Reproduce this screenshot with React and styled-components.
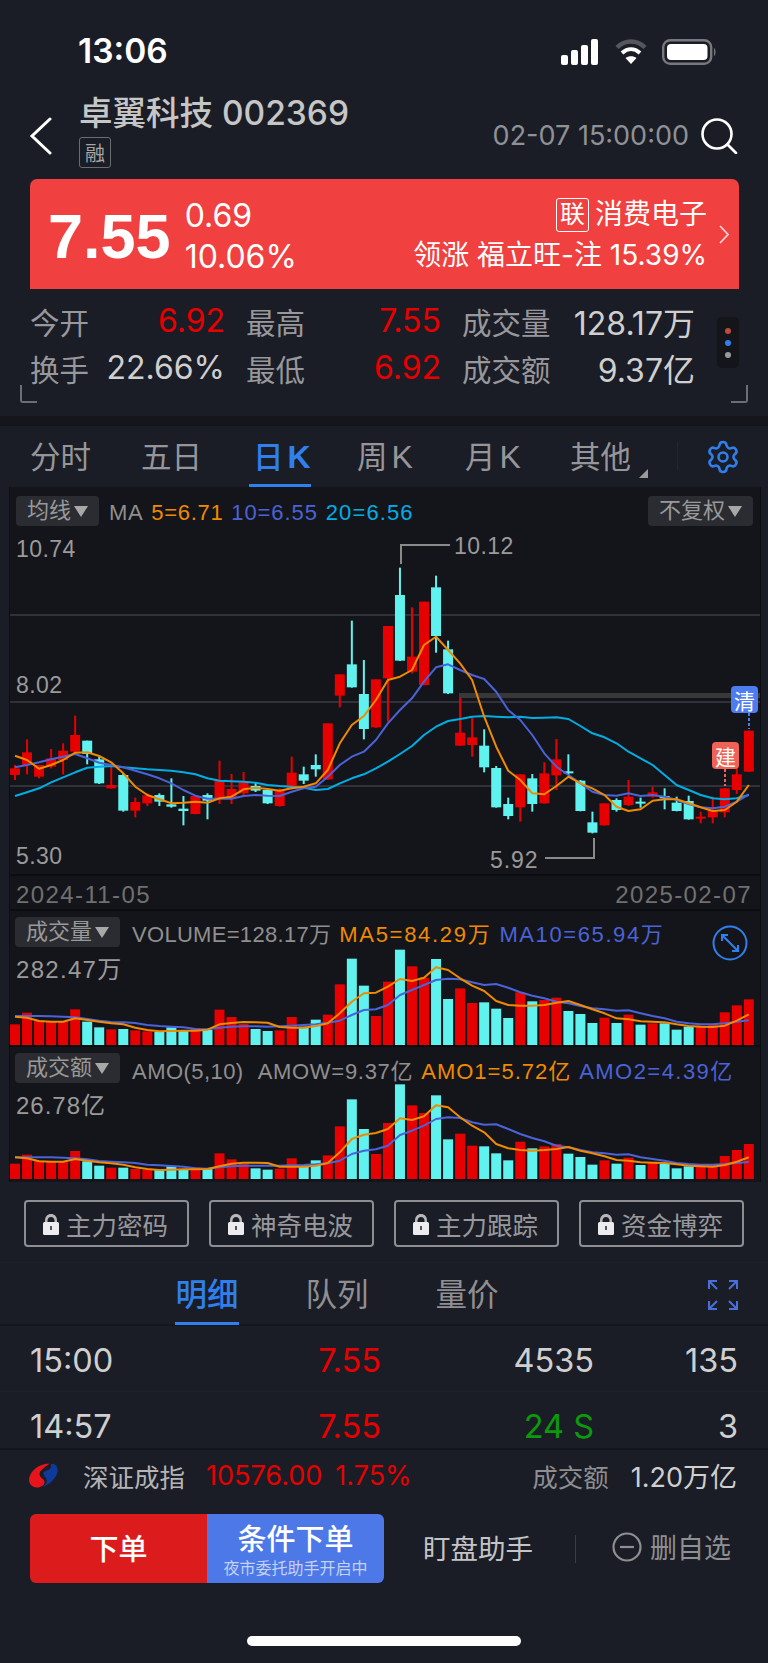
import React from 'react';
import styled, { createGlobalStyle } from 'styled-components';
import { Settings } from 'lucide-react';

const CN = '"Noto Sans CJK SC"';
const UI_FONT = `Inter, ${CN}, sans-serif`;
const CHART_FONT = `"Liberation Sans", ${CN}, sans-serif`;

const RED = '#e60000';
const CYAN = '#5ff2ee';
const ORANGE = '#f08a00';
const INDIGO = '#4a63d8';
const SKY = '#00aee6';
const BLUE = '#2f80ed';

const GlobalStyle = createGlobalStyle`
  html, body { margin: 0; padding: 0; background: #1a1d26; }
  * { box-sizing: border-box; }
`;

// Chart data, read off the picture. [rising, high, top, bottom, low]
const candles = [
  [1,705,715,735,750],[1,628,667,705,733],[1,705,705,740,745],[1,657,685,710,715],[1,640,662,690,733],
  [1,557,615,665,670],[0,632,632,672,703],[0,680,688,760,762],[1,700,765,775,776],[0,730,735,842,845],
  [1,803,816,842,862],[1,790,796,820,828],[0,790,795,815,828],[0,745,823,830,833],[0,798,836,843,886],
  [1,797,798,852,853],[0,790,795,812,868],[1,692,752,805,822],[1,732,777,805,822],[1,726,758,790,795],
  [0,758,768,782,786],[0,775,780,820,822],[1,775,780,828,830],[1,680,728,775,778],[0,710,733,752,762],
  [0,673,705,718,740],[1,580,580,748,750],[1,433,433,497,532],[0,272,403,472,473],[0,390,492,597,628],
  [1,448,448,592,594],[1,288,288,445,575],[0,113,195,392,393],[1,232,380,425,430],[1,215,215,465,466],
  [0,137,172,318,368],[0,332,358,490,492],[1,503,608,647,648],[1,563,622,645,680],[0,598,647,712,727],
  [0,708,714,832,833],[0,803,822,858,868],[1,733,733,832,875],[0,732,745,822,845],[1,697,730,820,821],
  [1,627,688,736,780],[0,673,724,730,735],[0,750,752,843,844],[0,845,877,908,910],[1,820,820,886,887],
  [0,805,810,840,845],[1,750,800,825,828],[0,803,815,820,833],[1,770,787,800,803],[0,775,798,805,838],
  [0,800,818,843,844],[0,797,813,868,869],[1,845,860,865,880],[1,800,840,862,880],[1,775,775,847,862],
  [1,715,733,780,792],[1,602,602,725,726],
];

const ma5 = [677,690,716,705,690,668,667,678,697,730,770,795,808,820,818,815,818,805,800,778,773,777,782,775,770,760,720,640,585,558,510,450,440,420,345,320,360,400,450,560,650,722,750,790,793,768,740,760,775,795,830,843,838,812,808,808,820,832,843,840,815,765];
const ma10 = [712,705,697,688,680,672,685,698,705,712,722,733,745,760,780,797,806,806,806,798,795,797,798,785,775,770,740,705,680,665,630,580,540,505,455,412,403,420,435,447,485,540,570,615,670,710,735,760,785,795,797,790,798,795,800,810,822,832,835,830,815,793];
const ma20 = [798,787,775,757,742,727,713,710,708,712,715,718,720,722,727,733,745,752,754,755,758,765,768,770,773,780,777,760,745,733,715,695,672,648,615,590,573,567,560,558,560,562,560,564,563,562,567,588,610,622,640,665,685,705,735,765,780,795,805,808,805,795];

const volTops = [358,323,347,350,349,313,350,367,373,372,376,379,380,367,377,369,375,314,336,357,372,378,376,336,365,344,329,238,161,242,333,230,134,184,218,162,282,250,294,292,311,339,262,289,285,278,318,327,354,338,354,329,359,355,355,374,365,362,357,322,301,283];
const volMa5 = [335,338,348,350,350,340,345,350,355,358,368,375,379,378,377,377,374,358,354,351,352,353,366,368,368,363,355,325,290,265,263,245,222,228,218,187,195,220,242,258,288,300,302,302,300,293,288,300,313,325,340,343,349,350,352,358,363,365,366,362,347,328];
const volMa10 = [333,333,333,334,335,337,342,347,351,352,354,360,363,365,367,372,373,368,365,364,364,365,364,362,360,358,353,347,330,315,313,300,270,255,240,225,221,223,232,240,237,248,262,272,280,290,295,303,310,313,317,316,325,333,340,350,355,358,358,355,350,346];

const amoTops = [779,752,770,772,772,741,772,785,791,791,795,797,797,787,795,790,795,748,766,780,793,797,794,763,789,769,754,667,586,675,750,657,541,604,627,574,706,689,725,727,748,769,713,733,727,720,749,759,782,769,779,761,783,775,780,793,787,782,782,756,738,720];
const amoMa1 = [760,763,772,773,773,765,770,775,778,782,790,795,798,797,796,796,795,787,779,776,776,777,788,788,788,785,777,745,705,692,687,675,643,648,637,604,610,640,665,685,720,733,738,740,738,735,729,740,748,757,768,770,775,776,777,781,785,787,788,783,773,760];
const amoMa2 = [760,760,760,760,761,763,766,771,773,775,777,782,784,786,788,793,794,790,787,785,785,785,785,784,783,781,778,770,750,740,736,725,693,680,665,645,640,642,655,662,661,675,690,702,712,725,730,738,745,748,752,751,760,765,770,777,780,782,782,780,777,774];

const STEP = 12.03;
const BAR_W = 10;
const barX = (i) => 5 + i * STEP;

const Page = styled.div`
  position: relative;
  width: 768px;
  height: 1663px;
  overflow: hidden;
  background: #1a1d26;
  font-family: ${UI_FONT};
  display: flex;
  flex-direction: column;
  color: #c8c8c8;
`;

// Status bar
const StatusBar = styled.div`
  height: 90px;
  flex: none;
  display: flex;
  align-items: flex-start;
  justify-content: space-between;
  padding: 34px 51px 0 78px;
`;

const Clock = styled.div`
  font-size: 33.5px;
  line-height: 34px;
  font-weight: 600;
  color: #fff;
`;

const StatusIcons = styled.div`
  display: flex;
  align-items: center;
  gap: 14px;
  padding-top: 5px;
`;

// Stock header
const Header = styled.div`
  height: 89px;
  flex: none;
  display: flex;
  padding: 0 30px 0 29px;
`;

const BackBtn = styled.div`
  width: 50px;
  display: flex;
  align-items: flex-start;
  padding-top: 27px;
`;

const TitleBlock = styled.div`
  flex: 1;
  display: flex;
  flex-direction: column;
  align-items: flex-start;
`;

const Title = styled.div`
  font-size: 33.5px;
  line-height: 40px;
  margin-top: 3px;
  color: #c6c6c6;
  font-weight: 500;
  white-space: nowrap;
`;

const TagBox = styled.div`
  width: 32px;
  height: 31px;
  margin-top: 4px;
  border: 1px solid #6a6c72;
  border-radius: 3px;
  display: flex;
  align-items: center;
  justify-content: center;
  font-size: 20px;
  color: #a6a6a6;
`;

const DateBlock = styled.div`
  display: flex;
  align-items: flex-start;
  gap: 11px;
  padding-top: 28px;
`;

const DateText = styled.div`
  font-size: 27px;
  line-height: 32px;
  color: #8f9196;
  margin-top: 2px;
  white-space: nowrap;
`;

// Red quote banner
const Banner = styled.div`
  height: 110px;
  flex: none;
  margin: 0 29px 0 30px;
  background: #f04040;
  border-radius: 7px 7px 0 0;
  display: flex;
  align-items: center;
  padding: 0 9px 0 18px;
  color: #fff;
`;

const BigPrice = styled.div`
  font-size: 63px;
  line-height: 60px;
  font-weight: 700;
  margin-top: 3px;
  margin-right: 14px;
  font-family: ${CHART_FONT};
`;

const ChangeBlock = styled.div`
  display: flex;
  flex-direction: column;
  gap: 4px;
  font-size: 32px;
  line-height: 37px;
  margin-top: 3px;
`;

const SectorBlock = styled.div`
  flex: 1;
  display: flex;
  flex-direction: column;
  align-items: flex-end;
  margin-right: 11px;
  margin-top: 2px;
  font-size: 28px;
  line-height: 41px;
  white-space: nowrap;
`;

const SectorName = styled.div`
  display: flex;
  align-items: center;
  gap: 6px;
`;

const LinkBadge = styled.span`
  width: 33px;
  height: 34px;
  border: 1px solid #fff;
  border-radius: 3px;
  display: flex;
  align-items: center;
  justify-content: center;
  font-size: 25px;
`;

// Quote stats
const Stats = styled.div`
  position: relative;
  height: 127px;
  flex: none;
  padding: 8px 0 0 30px;
  display: grid;
  grid-template-columns: 216px 216px 233px;
  grid-auto-rows: 47px;
  align-content: start;
`;

const StatCell = styled.div`
  display: flex;
  justify-content: space-between;
  align-items: center;
  padding-right: 21px;
  white-space: nowrap;
  font-size: 29.5px;
  &:nth-child(3n) { padding-right: 0; }
`;

const StatLabel = styled.span`
  color: #98989c;
`;

const StatValue = styled.span`
  color: ${(p) => (p.$red ? RED : '#cfcfcf')};
  font-size: 32px;
`;

const DotsBox = styled.div`
  position: absolute;
  left: 717px;
  top: 28px;
  width: 22px;
  height: 51px;
  border-radius: 5px;
  background: #13151b;
  display: flex;
  flex-direction: column;
  align-items: center;
  justify-content: center;
  gap: 6px;
`;

const Dot = styled.i`
  width: 6px;
  height: 6px;
  border-radius: 50%;
  background: ${(p) => p.$color};
`;

const CornerMark = styled.i`
  position: absolute;
  top: 96px;
  left: ${(p) => (p.$right ? '731px' : '20px')};
  width: 17px;
  height: 18px;
  border-bottom: 2px solid #6c6e74;
  border-${(p) => (p.$right ? 'right' : 'left')}: 2px solid #6c6e74;
  border-radius: ${(p) => (p.$right ? '0 0 3px 0' : '0 0 0 3px')};
`;

const Band = styled.div`
  height: 10px;
  flex: none;
  background: #14161b;
`;

// Period tabs
const PeriodTabs = styled.div`
  position: relative;
  height: 61px;
  flex: none;
  display: flex;
`;

const PeriodTab = styled.div`
  position: absolute;
  left: ${(p) => p.$left}px;
  top: 0;
  height: 61px;
  display: flex;
  align-items: baseline;
  padding-top: 11px;
  line-height: 40px;
  font-size: 30.5px;
  white-space: nowrap;
  color: ${(p) => (p.$active ? BLUE : '#96969a')};
  font-weight: ${(p) => (p.$active ? 500 : 400)};
  ${(p) => p.$active && `&::after {
    content: '';
    position: absolute;
    left: -4px;
    right: 0;
    bottom: 0;
    height: 3px;
    background: ${BLUE};
  }`}
`;

const KLetter = styled.span`
  font-family: ${CHART_FONT};
  font-weight: ${(p) => (p.$bold ? 700 : 400)};
  margin-left: 4px;
  font-size: 32px;
`;

const MoreMark = styled.i`
  position: absolute;
  left: 639px;
  top: 43px;
  width: 0;
  height: 0;
  border-left: 9px solid transparent;
  border-bottom: 9px solid #9a9a9a;
`;

const TabDivider = styled.i`
  position: absolute;
  left: 677px;
  top: 16px;
  width: 1px;
  height: 28px;
  background: #23262f;
`;

const GearWrap = styled.div`
  position: absolute;
  left: 705px;
  top: 13px;
  color: ${BLUE};
  display: flex;
`;

// Chart panels
const ChartArea = styled.div`
  height: 695px;
  flex: none;
  margin-left: 9px;
  width: 752px;
  background: #14151a;
  border-left: 1px solid #0c0d10;
  border-right: 1px solid #0c0d10;
  display: flex;
  flex-direction: column;
  font-family: ${CHART_FONT};
  letter-spacing: 0.45px;
`;

const PanelHead = styled.div`
  height: ${(p) => p.$h}px;
  flex: none;
  display: flex;
  align-items: flex-start;
  padding: ${(p) => p.$pt}px 7px 0 ${(p) => p.$pl}px;
  font-size: 22px;
  line-height: 30px;
  color: #8f8f8f;
  white-space: nowrap;
`;

const Pill = styled.div`
  height: 30px;
  padding: 0 11px 0 11px;
  border-radius: 4px;
  background: #2a2c31;
  color: #999;
  font-size: 22px;
  letter-spacing: 0;
  display: flex;
  align-items: center;
  gap: 3px;
  margin-right: ${(p) => p.$mr || 0}px;
  margin-left: ${(p) => (p.$end ? 'auto' : '0')};
`;

const Caret = styled.i`
  width: 0;
  height: 0;
  border-left: 7px solid transparent;
  border-right: 7px solid transparent;
  border-top: 11px solid #a8a8a8;
`;

const Reading = styled.span`
  color: ${(p) => p.$color || '#8f8f8f'};
  margin-right: ${(p) => p.$mr ?? 8}px;
  margin-top: ${(p) => p.$mt ?? 3}px;
  letter-spacing: ${(p) => p.$ls ?? 0.45}px;
`;

const ChartBox = styled.div`
  position: relative;
  height: ${(p) => p.$h}px;
  flex: none;
`;

const Plot = styled.svg`
  display: block;
  overflow: visible;
`;

const AxisLabel = styled.div`
  position: absolute;
  left: ${(p) => p.$left}px;
  top: ${(p) => p.$top}px;
  font-size: ${(p) => p.$size || 23}px;
  letter-spacing: ${(p) => p.$ls ?? 0.45}px;
  line-height: 24px;
  color: ${(p) => p.$color || '#9a9a9a'};
  white-space: nowrap;
`;

const TradeFlag = styled.div`
  position: absolute;
  left: ${(p) => p.$left}px;
  top: ${(p) => p.$top}px;
  width: 27px;
  height: 27px;
  border-radius: 4px;
  background: ${(p) => p.$color};
  color: #fff;
  font-size: 21px;
  letter-spacing: 0;
  display: flex;
  align-items: center;
  justify-content: center;
`;

const DateRow = styled.div`
  height: 37px;
  flex: none;
  border-top: 2px solid #0c0d10;
  border-bottom: 2px solid #0c0d10;
  display: flex;
  justify-content: space-between;
  align-items: center;
  padding: 5px 8px 0 6px;
  font-size: 24px;
  letter-spacing: 1.4px;
  color: #707070;
`;

const SubPanel = styled.div`
  flex: none;
  border-bottom: ${(p) => (p.$last ? 'none' : '2px solid #0c0d10')};
`;

const ExpandCircle = styled.div`
  position: absolute;
  right: 12px;
  top: -28px;
  color: ${BLUE};
  display: flex;
`;

// Locked indicator buttons
const IndicatorRow = styled.div`
  height: 80px;
  flex: none;
  padding: 18px 24px 0;
  display: grid;
  grid-template-columns: repeat(4, 1fr);
  gap: 20px;
  align-items: start;
`;

const IndicatorBtn = styled.div`
  height: 47px;
  border: 2px solid #8c8e92;
  border-radius: 4px;
  display: flex;
  align-items: center;
  padding-left: 16px;
  gap: 6px;
  font-size: 25.5px;
  color: #98989c;
  white-space: nowrap;
`;

// Trade detail
const DetailTabs = styled.div`
  position: relative;
  height: 64px;
  flex: none;
  border-top: 1px solid #1d2029;
  border-bottom: 2px solid #14161c;
  display: flex;
  gap: 66px;
  padding-left: 175px;
`;

const DetailTab = styled.div`
  position: relative;
  width: 64px;
  height: 61px;
  font-size: 31.5px;
  line-height: 64px;
  text-align: center;
  white-space: nowrap;
  color: ${(p) => (p.$active ? BLUE : '#8f8f92')};
  font-weight: ${(p) => (p.$active ? 500 : 400)};
  ${(p) => p.$active && `&::after {
    content: '';
    position: absolute;
    left: 0;
    right: 0;
    bottom: -1px;
    height: 3px;
    background: ${BLUE};
  }`}
`;

const FullscreenWrap = styled.div`
  position: absolute;
  left: 708px;
  top: 17px;
  display: flex;
`;

const RowList = styled.div`
  height: 122px;
  flex: none;
  overflow: hidden;
`;

const TradeRow = styled.div`
  height: 66px;
  border-bottom: 1px solid #1e2129;
  display: grid;
  grid-template-columns: 170px 181px 213px 144px;
  align-items: center;
  padding: 4px 0 0 30px;
  font-size: 32.5px;
`;

const Cell = styled.div`
  text-align: ${(p) => (p.$left ? 'left' : 'right')};
  color: ${(p) => p.$color || '#cfcfcf'};
  white-space: nowrap;
`;

// Index strip
const IndexRow = styled.div`
  height: 66px;
  flex: none;
  border-top: 2px solid #14161c;
  display: flex;
  align-items: center;
  padding: 0 31px 14px 29px;
  font-size: 26px;
  white-space: nowrap;
`;

const IndexName = styled.span`
  margin-left: 25px;
  color: #b4b4b6;
  font-size: 25.5px;
`;

const IndexNum = styled.span`
  color: ${RED};
  font-size: 27px;
  margin-left: ${(p) => p.$ml}px;
`;

const IndexAmount = styled.span`
  margin-left: auto;
  color: #8f8f92;
  font-size: 25.5px;
`;

const IndexAmountValue = styled.span`
  margin-left: 22px;
  color: #cfcfcf;
  font-size: 27px;
`;

// Bottom actions
const ActionRow = styled.div`
  height: 69px;
  flex: none;
  display: flex;
  align-items: center;
  padding-left: 30px;
`;

const OrderGroup = styled.div`
  width: 354px;
  height: 69px;
  display: flex;
  border-radius: 6px;
  overflow: hidden;
  color: #fff;
`;

const OrderBtn = styled.div`
  width: 177px;
  background: #dc1c1c;
  display: flex;
  align-items: center;
  justify-content: center;
  padding-bottom: 4px;
  font-size: 29px;
  font-weight: 500;
`;

const CondBtn = styled.div`
  width: 177px;
  background: #4c78e8;
  display: flex;
  flex-direction: column;
  align-items: center;
  padding-top: 9px;
`;

const CondTitle = styled.div`
  font-size: 29px;
  line-height: 34px;
  font-weight: 500;
`;

const CondSub = styled.div`
  font-size: 16px;
  line-height: 20px;
  margin-top: 1px;
  color: #c4d2f4;
  white-space: nowrap;
`;

const ActionText = styled.div`
  font-size: 27.5px;
  color: #c4c4c6;
  margin-left: ${(p) => p.$ml}px;
  margin-top: -4px;
  white-space: nowrap;
`;

const ActionDivider = styled.i`
  width: 1px;
  height: 28px;
  background: #3a3d45;
  margin-left: 42px;
`;

const RemoveBtn = styled.div`
  display: flex;
  align-items: center;
  gap: 8px;
  margin-left: 36px;
  margin-top: -4px;
  font-size: 27px;
  color: #8f8f92;
  white-space: nowrap;
`;

const HomeIndicator = styled.div`
  position: absolute;
  left: 247px;
  top: 1636px;
  width: 274px;
  height: 10px;
  border-radius: 5px;
  background: #fff;
`;

const linePath = (ys, toY) =>
  ys.map((y, i) => `${i ? 'L' : 'M'}${barX(i).toFixed(1)} ${toY(y).toFixed(1)}`).join(' ');

const MaLine = ({ ys, toY, color, w = 2 }) => (
  <path d={linePath(ys, toY)} fill="none" stroke={color} strokeWidth={w} strokeLinejoin="round" />
);

const PricePlot = () => {
  const toY = (z) => z / 3;
  return (
    <Plot width="750" height="344" viewBox="0 0 750 344">
      {[85, 172, 256].map((y) => (
        <line key={y} x1="0" x2="750" y1={y} y2={y} stroke="#30313a" strokeWidth="2" />
      ))}
      <rect x="449" y="163" width="301" height="5" fill="#383838" />
      {candles.map(([up, hi, top, bot, lo], i) => {
        const color = up ? RED : CYAN;
        return (
          <g key={i} fill={color}>
            <rect x={barX(i) - 1} y={toY(hi)} width="2" height={toY(lo) - toY(hi)} />
            <rect x={barX(i) - 5} y={toY(top)} width={BAR_W} height={Math.max(2, toY(bot) - toY(top))} />
          </g>
        );
      })}
      <MaLine ys={ma20} toY={toY} color={SKY} />
      <MaLine ys={ma10} toY={toY} color={INDIGO} />
      <MaLine ys={ma5} toY={toY} color={ORANGE} />
      <path d="M391 34V15H440" fill="none" stroke="#8a8a8a" strokeWidth="2" />
      <path d="M584 308V328H535" fill="none" stroke="#8a8a8a" strokeWidth="2" />
      <path d="M739 183V199" stroke="#4c7cf0" strokeWidth="2" strokeDasharray="3 2" />
      <path d="M715 239V256" stroke="#ef6255" strokeWidth="2" strokeDasharray="3 2" />
    </Plot>
  );
};

const BarsPlot = ({ tops, bottom, lines, offset, height }) => {
  const toY = (z) => z / 3 - offset;
  return (
    <Plot width="750" height={height} viewBox={`0 0 750 ${height}`}>
      {tops.map((t, i) => (
        <rect
          key={i}
          x={barX(i) - 5}
          y={toY(t)}
          width={BAR_W}
          height={toY(bottom) - toY(t)}
          fill={candles[i][0] ? RED : CYAN}
        />
      ))}
      {lines.map((l) => (
        <MaLine key={l.color} ys={l.ys} toY={toY} color={l.color} />
      ))}
    </Plot>
  );
};

const SignalIcon = () => (
  <svg width="40" height="26" viewBox="0 0 40 26" fill="#fff">
    <rect x="1" y="16" width="7" height="10" rx="2" />
    <rect x="11" y="11" width="7" height="15" rx="2" />
    <rect x="21" y="6" width="7" height="20" rx="2" />
    <rect x="31" y="0" width="7" height="26" rx="2" />
  </svg>
);

const WifiIcon = () => (
  <svg width="34" height="26" viewBox="0 0 34 26" fill="none">
    <path d="M3 8.5C11 0.5 23 0.5 31 8.5" stroke="#55575c" strokeWidth="4.5" />
    <path d="M8 14C13.5 9 20.5 9 26 14" stroke="#fff" strokeWidth="4" />
    <path d="M17 25L11.5 19C14.5 16.5 19.5 16.5 22.5 19Z" fill="#fff" />
  </svg>
);

const BatteryIcon = () => (
  <svg width="55" height="26" viewBox="0 0 55 26">
    <rect x="1.2" y="1.2" width="48" height="23.6" rx="7" fill="none" stroke="#77797e" strokeWidth="2.4" />
    <rect x="5" y="5" width="40.5" height="16" rx="4" fill="#fff" />
    <path d="M52 9C54 10 54 16 52 17Z" fill="#77797e" />
  </svg>
);

const BackIcon = () => (
  <svg width="23" height="38" viewBox="0 0 23 38" fill="none" stroke="#fff" strokeWidth="3" strokeLinecap="round">
    <path d="M21 2L3 19L21 36" />
  </svg>
);

const SearchIcon = () => (
  <svg width="38" height="36" viewBox="0 0 38 36" fill="none" stroke="#fff" strokeWidth="2.6" strokeLinecap="round">
    <circle cx="17" cy="16" r="14.5" />
    <path d="M28 27L36 35" />
  </svg>
);

const BannerChevron = () => (
  <svg width="12" height="19" viewBox="0 0 12 19" fill="none" stroke="#f8d4d4" strokeWidth="1.8">
    <path d="M2 1L10 9.5L2 18" />
  </svg>
);

const LockIcon = () => (
  <svg width="18" height="22" viewBox="0 0 18 22">
    <path d="M3 10V7.5C3 3.5 5.5 1 9 1S15 3.5 15 7.5V10" fill="#b8b8bc" />
    <path d="M5.5 10V8C5.5 5.5 7 4 9 4S12.5 5.5 12.5 8V10" fill="#1a1d26" />
    <rect x="1" y="9" width="16" height="13" rx="1.5" fill="#ececf0" />
    <rect x="8" y="13" width="2" height="4" fill="#555" />
  </svg>
);

const FullscreenIcon = () => (
  <svg width="30" height="30" viewBox="0 0 30 30" fill="none" stroke="#4a6fd8" strokeWidth="2">
    <path d="M1 9V1H9M1 1L9 9" />
    <path d="M29 9V1H21M29 1L21 9" />
    <path d="M1 21V29H9M1 29L9 21" />
    <path d="M29 21V29H21M29 29L21 21" />
  </svg>
);

const ResizeIcon = () => (
  <svg width="36" height="36" viewBox="0 0 36 36" fill="none" stroke="currentColor" strokeWidth="2">
    <circle cx="18" cy="18" r="16.5" />
    <path d="M10 10L26 26M10 16V10H16M26 20V26H20" />
  </svg>
);

const ExchangeLogo = () => (
  <svg width="29" height="25" viewBox="24 28 81 70">
    <path d="M82 30C55 28 25 50 24 75C24 92 40 100 55 95C68 90 72 80 62 72C52 65 50 55 60 47C66 42 72 35 82 30Z" fill="#e8141c" />
    <path d="M85 31C98 28 106 38 104 52C100 72 80 90 60 96C72 90 78 78 70 68C62 60 62 52 72 50C82 48 88 40 85 31Z" fill="#0e3a9c" />
  </svg>
);

const MinusCircle = () => (
  <svg width="30" height="30" viewBox="0 0 30 30" fill="none" stroke="#8f8f92" strokeWidth="2.2">
    <circle cx="15" cy="15" r="13.5" />
    <path d="M8 15H22" />
  </svg>
);

const stats = [
  { label: '今开', value: '6.92', red: true },
  { label: '最高', value: '7.55', red: true },
  { label: '成交量', value: '128.17万' },
  { label: '换手', value: '22.66%' },
  { label: '最低', value: '6.92', red: true },
  { label: '成交额', value: '9.37亿' },
];

const indicators = ['主力密码', '神奇电波', '主力跟踪', '资金博弈'];

const App = () => (
  <>
    <GlobalStyle />
    <Page>
      <StatusBar>
        <Clock>13:06</Clock>
        <StatusIcons>
          <SignalIcon />
          <WifiIcon />
          <BatteryIcon />
        </StatusIcons>
      </StatusBar>

      <Header>
        <BackBtn>
          <BackIcon />
        </BackBtn>
        <TitleBlock>
          <Title>卓翼科技 002369</Title>
          <TagBox>融</TagBox>
        </TitleBlock>
        <DateBlock>
          <DateText>02-07 15:00:00</DateText>
          <SearchIcon />
        </DateBlock>
      </Header>

      <Banner>
        <BigPrice>7.55</BigPrice>
        <ChangeBlock>
          <span>0.69</span>
          <span>10.06%</span>
        </ChangeBlock>
        <SectorBlock>
          <SectorName>
            <LinkBadge>联</LinkBadge>
            消费电子
          </SectorName>
          <div>领涨 福立旺-注 15.39%</div>
        </SectorBlock>
        <BannerChevron />
      </Banner>

      <Stats>
        {stats.map((s) => (
          <StatCell key={s.label}>
            <StatLabel>{s.label}</StatLabel>
            <StatValue $red={s.red}>{s.value}</StatValue>
          </StatCell>
        ))}
        <DotsBox>
          <Dot $color="#c04a3a" />
          <Dot $color={BLUE} />
          <Dot $color="#999" />
        </DotsBox>
        <CornerMark />
        <CornerMark $right />
      </Stats>
      <Band />

      <PeriodTabs>
        <PeriodTab $left={30}>分时</PeriodTab>
        <PeriodTab $left={141}>五日</PeriodTab>
        <PeriodTab $left={253} $active>
          日<KLetter $bold>K</KLetter>
        </PeriodTab>
        <PeriodTab $left={357}>
          周<KLetter>K</KLetter>
        </PeriodTab>
        <PeriodTab $left={465}>
          月<KLetter>K</KLetter>
        </PeriodTab>
        <PeriodTab $left={570}>其他</PeriodTab>
        <MoreMark />
        <TabDivider />
        <GearWrap>
          <Settings size={36} strokeWidth={1.7} />
        </GearWrap>
      </PeriodTabs>

      <ChartArea>
        <PanelHead $h={43} $pt={9} $pl={6}>
          <Pill $mr={10}>
            均线
            <Caret />
          </Pill>
          <Reading $mt={2} $ls={0.6}>MA</Reading>
          <Reading $mt={2} $ls={0.7} $color={ORANGE}>5=6.71</Reading>
          <Reading $mt={2} $ls={0.9} $color={INDIGO}>10=6.55</Reading>
          <Reading $mt={2} $ls={1.1} $color={SKY}>20=6.56</Reading>
          <Pill $end>
            不复权
            <Caret />
          </Pill>
        </PanelHead>
        <ChartBox $h={344}>
          <PricePlot />
          <AxisLabel $left={6} $top={7}>10.74</AxisLabel>
          <AxisLabel $left={6} $top={143}>8.02</AxisLabel>
          <AxisLabel $left={6} $top={314}>5.30</AxisLabel>
          <AxisLabel $left={444} $top={4}>10.12</AxisLabel>
          <AxisLabel $left={480} $top={318} $ls={0.9}>5.92</AxisLabel>
          <TradeFlag $left={721} $top={156} $color="#4c7cf0">清</TradeFlag>
          <TradeFlag $left={702} $top={212} $color="#ef6255">建</TradeFlag>
        </ChartBox>
        <DateRow>
          <span>2024-11-05</span>
          <span>2025-02-07</span>
        </DateRow>

        <SubPanel>
          <PanelHead $h={42} $pt={6} $pl={5}>
            <Pill $mr={12}>
              成交量
              <Caret />
            </Pill>
            <Reading $ls={0.3}>VOLUME=128.17万</Reading>
            <Reading $ls={1.7} $color={ORANGE}>MA5=84.29万</Reading>
            <Reading $ls={1.6} $color={INDIGO}>MA10=65.94万</Reading>
          </PanelHead>
          <ChartBox $h={92}>
            <BarsPlot
              tops={volTops}
              bottom={420}
              offset={48}
              height={92}
              lines={[
                { ys: volMa10, color: INDIGO },
                { ys: volMa5, color: ORANGE },
              ]}
            />
            <AxisLabel $left={6} $top={5} $size={24} $ls={1.3}>282.47万</AxisLabel>
            <ExpandCircle>
              <ResizeIcon />
            </ExpandCircle>
          </ChartBox>
        </SubPanel>

        <SubPanel $last>
          <PanelHead $h={41} $pt={6} $pl={5}>
            <Pill $mr={12}>
              成交额
              <Caret />
            </Pill>
            <Reading $mt={4} $mr={14}>AMO(5,10)</Reading>
            <Reading $mt={4} $ls={0.7}>AMOW=9.37亿</Reading>
            <Reading $mt={4} $ls={1} $color={ORANGE}>AMO1=5.72亿</Reading>
            <Reading $mt={4} $ls={1.45} $color={INDIGO}>AMO2=4.39亿</Reading>
          </PanelHead>
          <ChartBox $h={93}>
            <BarsPlot
              tops={amoTops}
              bottom={825}
              offset={184}
              height={93}
              lines={[
                { ys: amoMa2, color: INDIGO },
                { ys: amoMa1, color: ORANGE },
              ]}
            />
            <AxisLabel $left={6} $top={6} $size={24} $ls={1}>26.78亿</AxisLabel>
          </ChartBox>
        </SubPanel>
      </ChartArea>

      <IndicatorRow>
        {indicators.map((name) => (
          <IndicatorBtn key={name}>
            <LockIcon />
            {name}
          </IndicatorBtn>
        ))}
      </IndicatorRow>

      <DetailTabs>
        <DetailTab $active>明细</DetailTab>
        <DetailTab>队列</DetailTab>
        <DetailTab>量价</DetailTab>
        <FullscreenWrap>
          <FullscreenIcon />
        </FullscreenWrap>
      </DetailTabs>

      <RowList>
        <TradeRow>
          <Cell $left>15:00</Cell>
          <Cell $color={RED}>7.55</Cell>
          <Cell>4535</Cell>
          <Cell>135</Cell>
        </TradeRow>
        <TradeRow>
          <Cell $left>14:57</Cell>
          <Cell $color={RED}>7.55</Cell>
          <Cell $color="#0a9a0a">24 S</Cell>
          <Cell>3</Cell>
        </TradeRow>
      </RowList>

      <IndexRow>
        <ExchangeLogo />
        <IndexName>深证成指</IndexName>
        <IndexNum $ml={21}>10576.00</IndexNum>
        <IndexNum $ml={13}>1.75%</IndexNum>
        <IndexAmount>成交额</IndexAmount>
        <IndexAmountValue>1.20万亿</IndexAmountValue>
      </IndexRow>

      <ActionRow>
        <OrderGroup>
          <OrderBtn>下单</OrderBtn>
          <CondBtn>
            <CondTitle>条件下单</CondTitle>
            <CondSub>夜市委托助手开启中</CondSub>
          </CondBtn>
        </OrderGroup>
        <ActionText $ml={39}>盯盘助手</ActionText>
        <ActionDivider />
        <RemoveBtn>
          <MinusCircle />
          删自选
        </RemoveBtn>
      </ActionRow>

      <HomeIndicator />
    </Page>
  </>
);

export default App;
